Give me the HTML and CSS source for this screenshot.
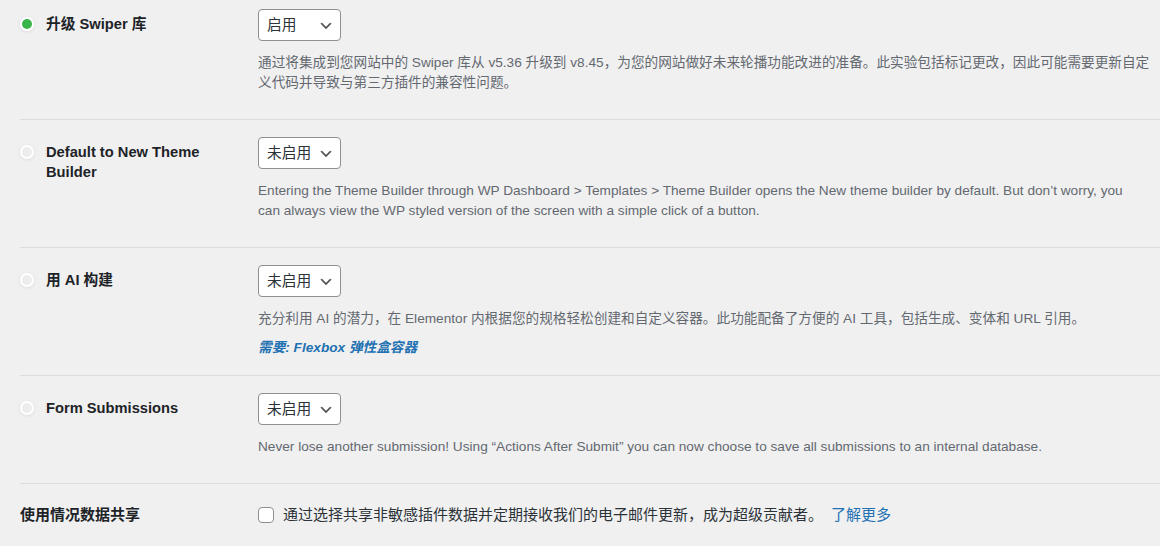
FILE: index.html
```html
<!DOCTYPE html>
<html lang="zh-CN">
<head>
    <meta charset="UTF-8">
    <meta name="viewport" content="width=device-width, initial-scale=1.0">
    <title>Elementor 实验</title>
    <link rel="stylesheet" href="styles.css">
</head>
<body>
    <div class="experiments">

        <div class="experiment first">
            <div class="experiment-title">
                <span class="indicator active"></span>
                <span class="title-text">升级 Swiper 库</span>
            </div>
            <div class="experiment-body">
                <div class="select-wrap">
                    <select class="state-select">
                        <option selected>启用</option>
                        <option>未启用</option>
                    </select>
                    <svg class="chevron" width="16" height="16" viewBox="0 0 20 20"><path d="M5 6l5 5 5-5 2 1-7 7-7-7 2-1z" fill="#555"/></svg>
                </div>
                <p class="description">通过将集成到您网站中的 Swiper 库从 v5.36 升级到 v8.45，为您的网站做好未来轮播功能改进的准备。此实验包括标记更改，因此可能需要更新自定义代码并导致与第三方插件的兼容性问题。</p>
            </div>
        </div>

        <div class="experiment">
            <div class="experiment-title">
                <span class="indicator"></span>
                <span class="title-text">Default to New Theme Builder</span>
            </div>
            <div class="experiment-body">
                <div class="select-wrap">
                    <select class="state-select">
                        <option>启用</option>
                        <option selected>未启用</option>
                    </select>
                    <svg class="chevron" width="16" height="16" viewBox="0 0 20 20"><path d="M5 6l5 5 5-5 2 1-7 7-7-7 2-1z" fill="#555"/></svg>
                </div>
                <p class="description narrow">Entering the Theme Builder through WP Dashboard &gt; Templates &gt; Theme Builder opens the New theme builder by default. But don’t worry, you can always view the WP styled version of the screen with a simple click of a button.</p>
            </div>
        </div>

        <div class="experiment">
            <div class="experiment-title">
                <span class="indicator"></span>
                <span class="title-text">用 AI 构建</span>
            </div>
            <div class="experiment-body">
                <div class="select-wrap">
                    <select class="state-select">
                        <option>启用</option>
                        <option selected>未启用</option>
                    </select>
                    <svg class="chevron" width="16" height="16" viewBox="0 0 20 20"><path d="M5 6l5 5 5-5 2 1-7 7-7-7 2-1z" fill="#555"/></svg>
                </div>
                <p class="description">充分利用 AI 的潜力，在 Elementor 内根据您的规格轻松创建和自定义容器。此功能配备了方便的 AI 工具，包括生成、变体和 URL 引用。</p>
                <p class="requires"><a href="#">需要: Flexbox 弹性盒容器</a></p>
            </div>
        </div>

        <div class="experiment">
            <div class="experiment-title">
                <span class="indicator"></span>
                <span class="title-text">Form Submissions</span>
            </div>
            <div class="experiment-body">
                <div class="select-wrap">
                    <select class="state-select">
                        <option>启用</option>
                        <option selected>未启用</option>
                    </select>
                    <svg class="chevron" width="16" height="16" viewBox="0 0 20 20"><path d="M5 6l5 5 5-5 2 1-7 7-7-7 2-1z" fill="#555"/></svg>
                </div>
                <p class="description">Never lose another submission! Using “Actions After Submit” you can now choose to save all submissions to an internal database.</p>
            </div>
        </div>

        <div class="experiment usage">
            <div class="usage-title">使用情况数据共享</div>
            <div class="usage-body">
                <input type="checkbox" id="usage-tracking">
                <label for="usage-tracking">通过选择共享非敏感插件数据并定期接收我们的电子邮件更新，成为超级贡献者。</label>
                <a href="#" class="learn-more">了解更多</a>
            </div>
        </div>

    </div>
</body>
</html>
```

FILE: styles.css
```css
body {
    margin: 0;
    padding: 0;
    background-color: #f0f0f1;
    color: #1d2327;
    font-family: "Liberation Sans", "Noto Sans CJK SC", sans-serif;
    font-size: 14.7px;
}

.experiments {
    padding-left: 20px;
}

.experiment {
    display: grid;
    grid-template-columns: 238px 1fr;
    padding: 17px 10px 17px 0;
    border-bottom: 1px solid #dcdcde;
}

.experiment.first {
    padding-top: 9px;
}

.experiment-title {
    display: flex;
    align-items: flex-start;
    gap: 14px;
    padding: 5px 30px 0 2px;
    font-weight: 600;
    line-height: 20px;
}

.indicator {
    flex: none;
    width: 10px;
    height: 10px;
    margin-top: 5px;
    border-radius: 50%;
    background-color: #ededed;
    box-shadow: 0 0 0 2px #fff, 0 1px 4px 2px rgba(0, 0, 0, 0.08);
}

.indicator.active {
    background-color: #39b54a;
}

.select-wrap {
    position: relative;
    width: 83px;
    height: 32px;
}

.state-select {
    -webkit-appearance: none;
    appearance: none;
    width: 83px;
    height: 32px;
    margin: 0;
    padding: 0 24px 0 8px;
    border: 1px solid #8c8f94;
    border-radius: 4px;
    background-color: #fff;
    color: #2c3338;
    font-family: inherit;
    font-size: 14.7px;
    line-height: 30px;
}

.chevron {
    position: absolute;
    right: 7px;
    top: 9px;
    pointer-events: none;
}

.description {
    margin: 12px 0 9px;
    color: #646970;
    font-size: 13.65px;
    line-height: 20px;
}

.description.narrow {
    max-width: 876px;
}

.requires {
    margin: 0;
    font-size: 13.65px;
    line-height: 20px;
}

.requires a {
    color: #2271b1;
    font-weight: bold;
    font-style: italic;
    text-decoration: none;
}

.experiment.usage {
    padding-top: 21px;
    border-bottom: none;
}

.usage-title {
    font-size: 15px;
    font-weight: 600;
    line-height: 20px;
}

.usage-body {
    display: flex;
    align-items: center;
    font-size: 15px;
    line-height: 20px;
    color: #2c3338;
}

.usage-body input {
    -webkit-appearance: none;
    appearance: none;
    width: 16px;
    height: 16px;
    margin: 0 9px 0 0;
    border: 1px solid #8c8f94;
    border-radius: 4px;
    background-color: #fff;
}

.learn-more {
    margin-left: 8px;
    color: #2271b1;
    text-decoration: none;
}
```
